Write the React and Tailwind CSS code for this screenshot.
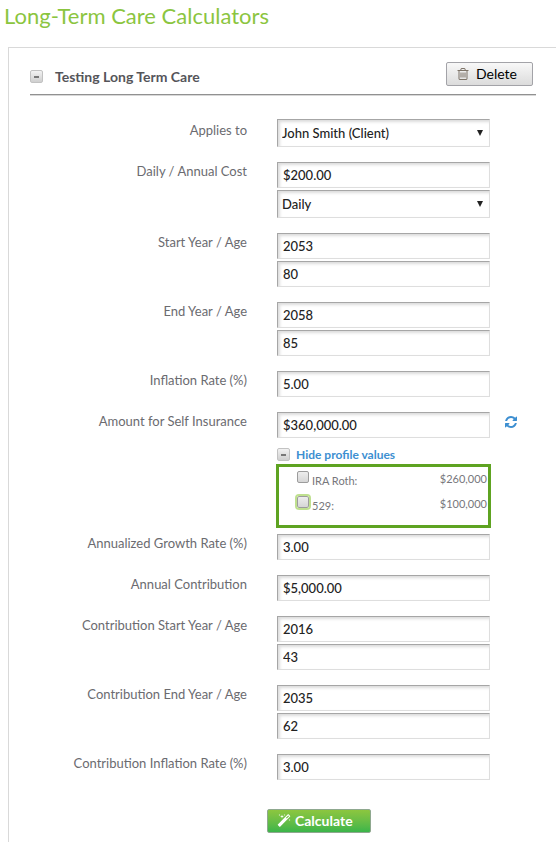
import React, { useState } from 'react';
import clsx from 'clsx';

const TrashIcon = () => (
  <svg viewBox="0 0 1792 1792" className="size-[14px] fill-[#7d7368]" aria-hidden="true">
    <path d="M704 736v576q0 14-9 23t-23 9h-64q-14 0-23-9t-9-23v-576q0-14 9-23t23-9h64q14 0 23 9t9 23zm256 0v576q0 14-9 23t-23 9h-64q-14 0-23-9t-9-23v-576q0-14 9-23t23-9h64q14 0 23 9t9 23zm256 0v576q0 14-9 23t-23 9h-64q-14 0-23-9t-9-23v-576q0-14 9-23t23-9h64q14 0 23 9t9 23zm128 724v-948h-896v948q0 22 7 40.5t14.5 27 10.5 8.5h832q3 0 10.5-8.5t14.5-27 7-40.5zm-672-1076h448l-48-117q-7-9-17-11h-317q-10 2-17 11zm928 32v64q0 14-9 23t-23 9h-96v948q0 83-47 143.5t-113 60.5h-832q-66 0-113-58.5t-47-141.5v-952h-96q-14 0-23-9t-9-23v-64q0-14 9-23t23-9h309l70-167q15-37 54-63t79-26h320q40 0 79 26t54 63l70 167h309q14 0 23 9t9 23z" />
  </svg>
);

const RefreshIcon = () => (
  <svg viewBox="0 0 1536 1536" className="size-3 fill-[#3d8fd1]" aria-hidden="true">
    <path d="M1511 928q0 5-1 7-64 268-268 434.5t-478 166.5q-146 0-282.5-55t-243.5-157l-129 129q-19 19-45 19t-45-19-19-45v-448q0-26 19-45t45-19h448q26 0 45 19t19 45-19 45l-137 137q71 66 161 102t187 36q134 0 250-65t186-179q11-17 53-117 8-23 30-23h192q13 0 22.5 9.5t9.5 22.5zm25-800v448q0 26-19 45t-45 19h-448q-26 0-45-19t-19-45 19-45l138-138q-148-137-349-137-134 0-250 65t-186 179q-11 17-53 117-8 23-30 23h-199q-13 0-22.5-9.5t-9.5-22.5v-7q65-268 270-434.5t480-166.5q146 0 284 55.5t245 156.5l130-129q19-19 45-19t45 19 19 45z" />
  </svg>
);

const WandIcon = () => (
  <svg viewBox="0 0 1792 1792" className="size-[14px] fill-white" aria-hidden="true">
    <path d="M1254 581l293-293-107-107-293 293zm447-293q0 27-18 45l-1286 1286q-18 18-45 18t-45-18l-198-198q-18-18-18-45t18-45l1286-1286q18-18 45-18t45 18l198 198q18 18 18 45zm-1351-190l98 30-98 30-30 98-30-98-98-30 98-30 30-98zm350 162l196 60-196 60-60 196-60-196-196-60 196-60 60-196zm930 478l98 30-98 30-30 98-30-98-98-30 98-30 30-98zm-640-640l98 30-98 30-30 98-30-98-98-30 98-30 30-98z" />
  </svg>
);

const ToggleButton = ({ label, open, onClick }) => (
  <button
    type="button"
    aria-label={label}
    aria-expanded={open}
    onClick={onClick}
    className="flex size-[13px] shrink-0 items-center justify-center rounded-xs border border-[#c2c2c2] bg-linear-to-b from-[#f2f2f2] to-[#cfcfcf]"
  >
    <span className="relative h-[2px] w-[5px] bg-[#777]">
      {!open && <span className="absolute -top-[2px] left-[2px] h-[5px] w-px bg-[#777]" />}
    </span>
  </button>
);

const fieldClass =
  'block w-full appearance-none border border-t-[#a6a6a6] border-r-[#dedede] border-b-[#dedede] border-l-[#a6a6a6] bg-white text-[13px] font-medium text-[#222] shadow-[inset_2px_2px_3px_#dcdcdc] outline-none';

const TextField = (props) => <input type="text" className={clsx(fieldClass, 'h-[26px] px-[5px]')} {...props} />;

const SelectField = ({ options, ...props }) => (
  <div className="relative">
    <select className={clsx(fieldClass, 'h-7 pt-[2px] pr-5 pl-1')} {...props}>
      {options.map((option) => (
        <option key={option}>{option}</option>
      ))}
    </select>
    <svg viewBox="0 0 6 6" className="pointer-events-none absolute top-[11px] right-[7px] size-[6px] fill-[#222]" aria-hidden="true">
      <path d="M0 0h6L3 6z" />
    </svg>
  </div>
);

const FormRow = ({ id, label, labelClass = 'pt-px', action, children }) => (
  <div className="grid grid-cols-[247fr_213fr_46fr] items-start">
    <label htmlFor={id} className={clsx('pr-[30px] text-right leading-4 text-[#6b6b70]', labelClass)}>
      {label}
    </label>
    <div className="flex min-w-0 flex-col gap-[2px]">{children}</div>
    {action}
  </div>
);

const accounts = [
  { id: 'ira-roth', name: 'IRA Roth:', value: '$260,000' },
  { id: 'plan-529', name: '529:', value: '$100,000', focused: true },
];

const ProfileValues = () => {
  const [open, setOpen] = useState(true);

  return (
    <>
      <div className="mt-[7px] flex h-[15px] items-center gap-[6px]">
        <ToggleButton label="Toggle profile values" open={open} onClick={() => setOpen(!open)} />
        <button type="button" onClick={() => setOpen(!open)} className="text-xs font-bold text-[#3d8fd1]">
          {open ? 'Hide profile values' : 'Show profile values'}
        </button>
      </div>
      {open && (
        <div className="-mx-px mb-[-9px] flex h-16 flex-col gap-[7px] border-3 border-[#5ea321] pt-1 pr-[1px] pl-[18px] text-[11px] leading-4 text-[#77777c]">
          {accounts.map((account) => (
            <div key={account.id} className="flex items-start justify-between">
              <div className="flex items-start gap-[3px]">
                <input
                  type="checkbox"
                  id={account.id}
                  className={clsx(
                    'size-3 appearance-none rounded-xs border border-[#9c9c9c] bg-linear-to-b from-[#ededed] to-[#d6d6d6] checked:from-[#5ea321] checked:to-[#5ea321]',
                    account.focused && 'outline-2 outline-[#bfe08f]'
                  )}
                />
                <label htmlFor={account.id} className="pt-[2px]">
                  {account.name}
                </label>
              </div>
              <span>{account.value}</span>
            </div>
          ))}
        </div>
      )}
    </>
  );
};

const CalculatorForm = () => (
  <form className="mt-6 flex flex-col gap-[15px] text-[13px]" onSubmit={(e) => e.preventDefault()}>
    <FormRow id="applies-to" label="Applies to" labelClass="pt-[3px]">
      <SelectField id="applies-to" options={['John Smith (Client)']} />
    </FormRow>
    <FormRow id="cost" label="Daily / Annual Cost">
      <TextField id="cost" defaultValue="$200.00" />
      <SelectField aria-label="Cost period" options={['Daily', 'Annual']} />
    </FormRow>
    <FormRow id="start-year" label="Start Year / Age">
      <TextField id="start-year" defaultValue="2053" />
      <TextField aria-label="Start age" defaultValue="80" />
    </FormRow>
    <FormRow id="end-year" label="End Year / Age">
      <TextField id="end-year" defaultValue="2058" />
      <TextField aria-label="End age" defaultValue="85" />
    </FormRow>
    <FormRow id="inflation" label="Inflation Rate (%)">
      <TextField id="inflation" defaultValue="5.00" />
    </FormRow>
    <FormRow
      id="self-insurance"
      label="Amount for Self Insurance"
      action={
        <button type="button" aria-label="Refresh amount" className="mt-1 ml-[15px] justify-self-start">
          <RefreshIcon />
        </button>
      }
    >
      <TextField id="self-insurance" defaultValue="$360,000.00" />
      <ProfileValues />
    </FormRow>
    <FormRow id="growth" label="Annualized Growth Rate (%)">
      <TextField id="growth" defaultValue="3.00" />
    </FormRow>
    <FormRow id="contribution" label="Annual Contribution">
      <TextField id="contribution" defaultValue="$5,000.00" />
    </FormRow>
    <FormRow id="contribution-start" label="Contribution Start Year / Age">
      <TextField id="contribution-start" defaultValue="2016" />
      <TextField aria-label="Contribution start age" defaultValue="43" />
    </FormRow>
    <FormRow id="contribution-end" label="Contribution End Year / Age">
      <TextField id="contribution-end" defaultValue="2035" />
      <TextField aria-label="Contribution end age" defaultValue="62" />
    </FormRow>
    <FormRow id="contribution-inflation" label="Contribution Inflation Rate (%)">
      <TextField id="contribution-inflation" defaultValue="3.00" />
    </FormRow>
    <div className="mt-[14px] flex justify-center pl-[72px]">
      <button
        type="submit"
        className="flex h-6 w-[104px] items-center gap-1 rounded-xs border border-[#8fa88f] bg-linear-to-b from-[#8cc63f] to-[#39b54a] pl-[9px] text-sm font-bold text-white"
      >
        <WandIcon />
        Calculate
      </button>
    </div>
  </form>
);

export default function App() {
  const [open, setOpen] = useState(true);

  return (
    <div className="min-h-screen overflow-x-hidden bg-white pl-2 font-['Lato',sans-serif]">
      <h1 className="-ml-1 h-[47px] pt-[2px] text-[22px] leading-7 text-[#8bc53f]">Long-Term Care Calculators</h1>
      <main className="border-t border-l border-[#d9d9d9] pt-[14px] pr-5 pb-[9px] pl-[21px]">
        <header className="flex h-[33px] items-start border-b border-[#919191] pr-[3px] shadow-[0_1px_0_#d8d8d8]">
          <div className="flex h-[29px] items-center gap-3">
            <ToggleButton label="Toggle calculator" open={open} onClick={() => setOpen(!open)} />
            <h2 className="text-sm font-bold text-[#55555a]">Testing Long Term Care</h2>
          </div>
          <button
            type="button"
            className="ml-auto flex h-6 w-[87px] items-center gap-[6px] rounded-xs border border-[#a3a3a8] bg-linear-to-b from-[#f8f8f8] to-[#dcdcdc] pl-[9px] text-sm text-black"
          >
            <TrashIcon />
            Delete
          </button>
        </header>
        {open && <CalculatorForm />}
      </main>
    </div>
  );
}
